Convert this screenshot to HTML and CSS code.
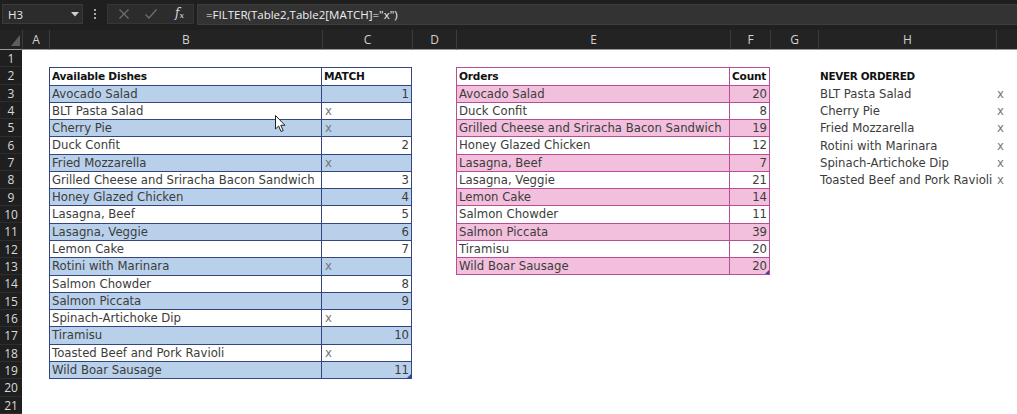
FILE: index.html
```html
<!DOCTYPE html>
<html lang="en">
<head>
<meta charset="utf-8">
<title>Sheet</title>
<link rel="stylesheet" href="styles.css">
</head>
<body>
<div class="app">
  <div class="toolbar">
    <div class="namebox">
      <span class="nb-text">H3</span>
      <svg class="nb-arrow" width="8" height="5" viewBox="0 0 8 5"><path d="M0 0 H8 L4 4.5 Z" fill="#d0d0d0"/></svg>
    </div>
    <div class="kebab">
      <svg width="4" height="12" viewBox="0 0 4 12"><circle cx="2" cy="2" r="1.1" fill="#c8c8c8"/><circle cx="2" cy="6" r="1.1" fill="#c8c8c8"/><circle cx="2" cy="10" r="1.1" fill="#c8c8c8"/></svg>
    </div>
    <div class="fxbox">
      <svg class="ico" width="12" height="12" viewBox="0 0 12 12"><path d="M1.5 1.5 L10.5 10.5 M10.5 1.5 L1.5 10.5" stroke="#6e6e6e" stroke-width="1.2" fill="none"/></svg>
      <svg class="ico" width="14" height="12" viewBox="0 0 14 12"><path d="M1.5 6.5 L5 10 L12.5 1.5" stroke="#6e6e6e" stroke-width="1.3" fill="none"/></svg>
      <span class="fx">f<sub>x</sub></span>
    </div>
    <div class="formula">=FILTER(Table2,Table2[MATCH]="x")</div>
  </div>

  <div class="sheet">
    <div class="corner"><svg width="9" height="11" viewBox="0 0 9 11"><path d="M9 0 V11 H0 Z" fill="#5e5e5e"/></svg></div>
    <div class="colh">A</div>
    <div class="colh">B</div>
    <div class="colh">C</div>
    <div class="colh">D</div>
    <div class="colh">E</div>
    <div class="colh">F</div>
    <div class="colh">G</div>
    <div class="colh">H</div>
    <div class="colh last"></div>

    <div class="rowh r1">1</div><div class="rowh r2">2</div><div class="rowh r3">3</div>
    <div class="rowh r4">4</div><div class="rowh r5">5</div><div class="rowh r6">6</div>
    <div class="rowh r7">7</div><div class="rowh r8">8</div><div class="rowh r9">9</div>
    <div class="rowh r10">10</div><div class="rowh r11">11</div><div class="rowh r12">12</div>
    <div class="rowh r13">13</div><div class="rowh r14">14</div><div class="rowh r15">15</div>
    <div class="rowh r16">16</div><div class="rowh r17">17</div><div class="rowh r18">18</div>
    <div class="rowh r19">19</div><div class="rowh r20">20</div><div class="rowh r21">21</div>

    <div class="tbl tbl-blue">
      <div class="tr head"><div class="c1">Available Dishes</div><div class="c2 hd">MATCH</div></div>
      <div class="tr band"><div class="c1">Avocado Salad</div><div class="c2 num">1</div></div>
      <div class="tr"><div class="c1">BLT Pasta Salad</div><div class="c2 x">x</div></div>
      <div class="tr band"><div class="c1">Cherry Pie</div><div class="c2 x">x</div></div>
      <div class="tr"><div class="c1">Duck Confit</div><div class="c2 num">2</div></div>
      <div class="tr band"><div class="c1">Fried Mozzarella</div><div class="c2 x">x</div></div>
      <div class="tr"><div class="c1">Grilled Cheese and Sriracha Bacon Sandwich</div><div class="c2 num">3</div></div>
      <div class="tr band"><div class="c1">Honey Glazed Chicken</div><div class="c2 num">4</div></div>
      <div class="tr"><div class="c1">Lasagna, Beef</div><div class="c2 num">5</div></div>
      <div class="tr band"><div class="c1">Lasagna, Veggie</div><div class="c2 num">6</div></div>
      <div class="tr"><div class="c1">Lemon Cake</div><div class="c2 num">7</div></div>
      <div class="tr band"><div class="c1">Rotini with Marinara</div><div class="c2 x">x</div></div>
      <div class="tr"><div class="c1">Salmon Chowder</div><div class="c2 num">8</div></div>
      <div class="tr band"><div class="c1">Salmon Piccata</div><div class="c2 num">9</div></div>
      <div class="tr"><div class="c1">Spinach-Artichoke Dip</div><div class="c2 x">x</div></div>
      <div class="tr band"><div class="c1">Tiramisu</div><div class="c2 num">10</div></div>
      <div class="tr"><div class="c1">Toasted Beef and Pork Ravioli</div><div class="c2 x">x</div></div>
      <div class="tr band"><div class="c1">Wild Boar Sausage</div><div class="c2 num">11</div></div>
      <span class="handle"></span>
    </div>

    <div class="tbl tbl-pink">
      <div class="tr head"><div class="c1">Orders</div><div class="c2 hd">Count</div></div>
      <div class="tr band"><div class="c1">Avocado Salad</div><div class="c2 num">20</div></div>
      <div class="tr"><div class="c1">Duck Confit</div><div class="c2 num">8</div></div>
      <div class="tr band"><div class="c1">Grilled Cheese and Sriracha Bacon Sandwich</div><div class="c2 num">19</div></div>
      <div class="tr"><div class="c1">Honey Glazed Chicken</div><div class="c2 num">12</div></div>
      <div class="tr band"><div class="c1">Lasagna, Beef</div><div class="c2 num">7</div></div>
      <div class="tr"><div class="c1">Lasagna, Veggie</div><div class="c2 num">21</div></div>
      <div class="tr band"><div class="c1">Lemon Cake</div><div class="c2 num">14</div></div>
      <div class="tr"><div class="c1">Salmon Chowder</div><div class="c2 num">11</div></div>
      <div class="tr band"><div class="c1">Salmon Piccata</div><div class="c2 num">39</div></div>
      <div class="tr"><div class="c1">Tiramisu</div><div class="c2 num">20</div></div>
      <div class="tr band"><div class="c1">Wild Boar Sausage</div><div class="c2 num">20</div></div>
      <span class="handle"></span>
    </div>

    <div class="never">
      <div class="nv-row"><div class="nv-name nv-head">NEVER ORDERED</div><div class="nv-x"></div></div>
      <div class="nv-row"><div class="nv-name">BLT Pasta Salad</div><div class="nv-x">x</div></div>
      <div class="nv-row"><div class="nv-name">Cherry Pie</div><div class="nv-x">x</div></div>
      <div class="nv-row"><div class="nv-name">Fried Mozzarella</div><div class="nv-x">x</div></div>
      <div class="nv-row"><div class="nv-name">Rotini with Marinara</div><div class="nv-x">x</div></div>
      <div class="nv-row"><div class="nv-name">Spinach-Artichoke Dip</div><div class="nv-x">x</div></div>
      <div class="nv-row"><div class="nv-name">Toasted Beef and Pork Ravioli</div><div class="nv-x">x</div></div>
    </div>

    <svg class="cursor" width="12" height="18" viewBox="0 0 12 18"><path d="M0.5 0.5 V14 L3.6 11 L6 16.5 L8.2 15.6 L5.8 10.3 H10 Z" fill="#ffffff" stroke="#222" stroke-width="1" stroke-linejoin="round"/></svg>
  </div>
</div>
</body>
</html>
```
FILE: styles.css
```css
* { box-sizing: border-box; }
html, body { margin: 0; padding: 0; }
body {
  width: 1017px;
  height: 414px;
  overflow: hidden;
  background: #ffffff;
  font-family: "DejaVu Sans", sans-serif;
}
.app { width: 1017px; height: 414px; display: flex; flex-direction: column; }

/* toolbar */
.toolbar {
  height: 30px;
  background: #1f1f1f;
  display: flex;
  align-items: flex-start;
  padding-top: 4px;
  padding-left: 2px;
  font-family: "Open Sans", "Noto Sans", sans-serif;
}
.namebox {
  width: 81px;
  height: 20px;
  background: #2c2c2c;
  border: 1px solid #3a3a3a;
  display: flex;
  align-items: center;
  justify-content: space-between;
  padding: 0 3px 0 5px;
  color: #e8e8e8;
  font-size: 11.5px;
}
.nb-arrow { display: block; }
.kebab { width: 24px; height: 20px; display: flex; align-items: center; justify-content: center; }
.kebab svg { display: block; }
.fxbox {
  width: 87px;
  height: 20px;
  background: #2c2c2c;
  border: 1px solid #363636;
  display: flex;
  align-items: center;
  padding-left: 10px;
  gap: 14px;
}
.ico { display: block; }
.fx {
  color: #dcdcdc;
  font-family: "DejaVu Serif", serif;
  font-style: italic;
  font-size: 12px;
  line-height: 12px;
  margin-left: 3px;
}
.fx sub { font-size: 8px; vertical-align: -1px; }
.formula {
  margin-left: 3px;
  flex: 1;
  height: 21px;
  background: #333333;
  border: 1px solid #3d3d3d;
  border-right: none;
  color: #f0f0f0;
  font-size: 11.5px;
  line-height: 19px;
  padding-left: 8px;
}

/* sheet */
.sheet {
  position: relative;
  display: grid;
  grid-template-columns: 22px 27px 273px 90px 44px 274px 40px 48px 178px 1fr;
  grid-template-rows: 20px repeat(21, 17.333px);
  background: #ffffff;
}
.corner {
  grid-column: 1; grid-row: 1;
  background: #232323;
  border-bottom: 1px solid #9a9a9a;
  display: flex; align-items: flex-end; justify-content: flex-end;
  padding: 0 2px 3px 0;
}
.corner svg { display: block; }
.colh {
  grid-row: 1;
  background: #232323;
  border-left: 1px solid #3c3c3c;
  border-bottom: 1px solid #9a9a9a;
  color: #d2d2d2;
  font-family: "Open Sans", "Noto Sans", sans-serif;
  font-size: 12px;
  line-height: 19px;
  text-align: center;
}
.colh.last { border-left: 1px solid #3c3c3c; }
.rowh {
  grid-column: 1;
  background: #1f1f1f;
  border-bottom: 1px solid #2e2e2e;
  color: #dadada;
  font-family: "Open Sans", "Noto Sans", sans-serif;
  font-size: 12px;
  line-height: 17px;
  text-align: center;
}
.r1 { grid-row: 2; } .r2 { grid-row: 3; } .r3 { grid-row: 4; } .r4 { grid-row: 5; }
.r5 { grid-row: 6; } .r6 { grid-row: 7; } .r7 { grid-row: 8; } .r8 { grid-row: 9; }
.r9 { grid-row: 10; } .r10 { grid-row: 11; } .r11 { grid-row: 12; } .r12 { grid-row: 13; }
.r13 { grid-row: 14; } .r14 { grid-row: 15; } .r15 { grid-row: 16; } .r16 { grid-row: 17; }
.r17 { grid-row: 18; } .r18 { grid-row: 19; } .r19 { grid-row: 20; } .r20 { grid-row: 21; }
.r21 { grid-row: 22; }

/* tables */
.tbl {
  position: relative;
  display: flex;
  flex-direction: column;
  border: 1px solid var(--bd);
  font-size: 11.7px;
  color: #3c3c3c;
  overflow: hidden;
}
.tbl-blue { --bd: #34457f; --band: #b8d0ea; grid-column: 3 / span 2; grid-row: 3 / span 18; }
.tbl-pink { --bd: #b84d94; --band: #f2c0dc; grid-column: 6 / span 2; grid-row: 3 / span 12; }
.tr {
  flex: 1 1 0;
  min-height: 0;
  display: grid;
  grid-template-columns: 272px 1fr;
  border-top: 1px solid var(--bd);
  line-height: 17px;
  white-space: nowrap;
}
.tr.head { border-top: none; }
.tbl-pink .tr { grid-template-columns: 273px 1fr; }
.tr.band { background: var(--band); }
.c1 { border-right: 1px solid var(--bd); padding-left: 2px; overflow: hidden; }
.c2 { padding: 0 2px; }
.head .c1, .c2.hd {
  color: #111111;
  font-weight: bold;
  font-size: 10.6px;
  letter-spacing: -0.2px;
}
.num { text-align: right; }
.x { color: #777777; padding-left: 3px; }
.handle {
  position: absolute;
  right: 0;
  bottom: 0;
  width: 0; height: 0;
  border-left: 4px solid transparent;
  border-bottom: 4px solid #2f4a9a;
}

/* never ordered list */
.never {
  grid-column: 9 / span 2;
  grid-row: 3 / span 7;
  display: flex;
  flex-direction: column;
  font-size: 11.7px;
  color: #3c3c3c;
}
.nv-row { flex: 1 1 0; min-height: 0; display: grid; grid-template-columns: 178px 1fr; line-height: 18px; white-space: nowrap; }
.nv-name { padding-left: 2px; overflow: visible; }
.nv-head { color: #111111; font-weight: bold; font-size: 10.4px; letter-spacing: -0.3px; }
.nv-x { color: #777777; padding-left: 1px; }

.cursor {
  position: absolute;
  left: 275px;
  top: 85px;
  display: block;
}
```
